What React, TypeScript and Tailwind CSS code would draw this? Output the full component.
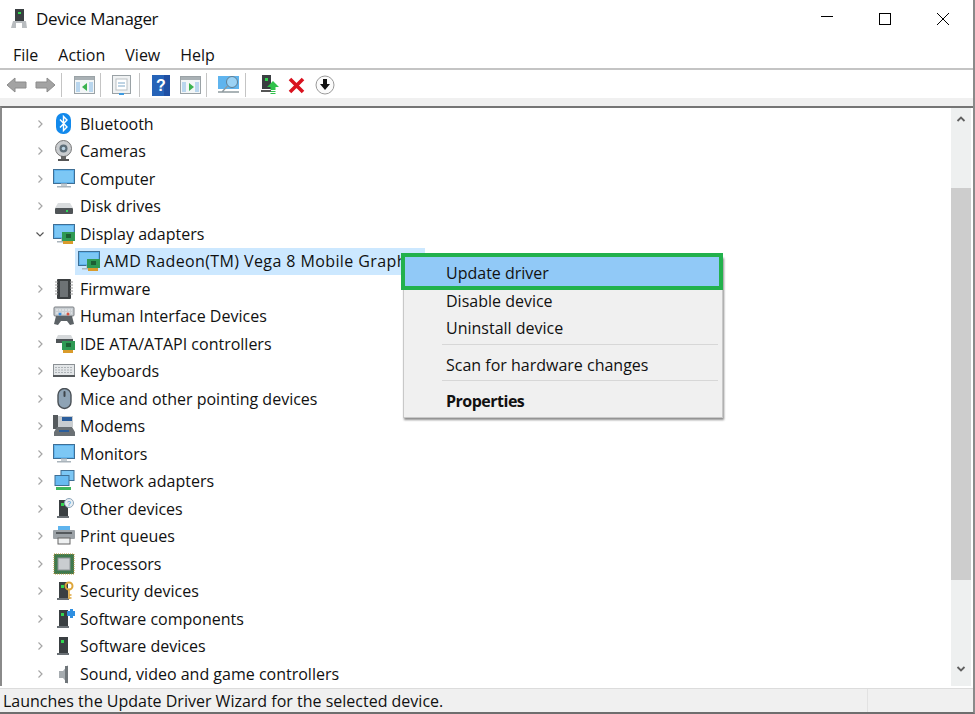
import type { ReactNode } from "react";

const font = "font-['Open_Sans','Noto_Sans',sans-serif]";

const Svg = ({ children, w = 22, h = 22 }: { children: ReactNode; w?: number; h?: number }) => (
  <svg width={w} height={h} viewBox={`0 0 ${w} ${h}`} className="shrink-0">
    {children}
  </svg>
);

const Screen = ({ board }: { board?: boolean }) => (
  <Svg>
    <rect x="0.5" y="1.5" width="21" height="14" fill="#5fb4ee" stroke="#3f6f95" />
    <rect x="2" y="3" width="18" height="11" fill="#7cc7f5" />
    <rect x="8" y="15.5" width="6" height="2.5" fill="#c4ccd2" />
    <rect x="4" y="18" width="14" height="1.5" fill="#aab4bb" />
    {board && (
      <>
        <rect x="9" y="9" width="13" height="9" fill="#2f9a54" />
        <rect x="13" y="11" width="5" height="4" fill="#1d5f34" />
        <rect x="10" y="18" width="10" height="3" fill="#d99b2b" />
      </>
    )}
  </Svg>
);

const Tower = ({ children }: { children?: ReactNode }) => (
  <Svg>
    <rect x="6" y="2" width="9" height="16" fill="#3a3f42" />
    <rect x="8" y="5" width="3" height="3" fill="#31d64f" />
    <rect x="4" y="18" width="12" height="2" fill="#6a7075" />
    {children}
  </Svg>
);

const icons: Record<string, ReactNode> = {
  Bluetooth: (
    <Svg>
      <rect x="3" y="0" width="15" height="21" rx="7" fill="#1289ec" />
      <path d="M7 6.5l7 7.5-3.5 3.5V3.5L14 7l-7 7.5" fill="none" stroke="#fff" strokeWidth="1.4" />
    </Svg>
  ),
  Cameras: (
    <Svg>
      <circle cx="10.5" cy="8.5" r="8" fill="#c9cccf" stroke="#777" />
      <circle cx="10.5" cy="8.5" r="4" fill="#5d6d78" />
      <circle cx="10.5" cy="8.5" r="1.8" fill="#b9d2e2" />
      <rect x="8" y="16" width="5" height="3" fill="#666" />
      <rect x="5" y="19" width="11" height="2" fill="#555" />
    </Svg>
  ),
  Computer: <Screen />,
  "Disk drives": (
    <Svg>
      <path d="M5 8h12l3 5H2z" fill="#d9dcde" />
      <rect x="2" y="13" width="18" height="6" rx="1" fill="#4f5457" />
      <rect x="13" y="15" width="2" height="2" fill="#2fd65a" />
    </Svg>
  ),
  "Display adapters": <Screen board />,
  Firmware: (
    <Svg>
      <rect x="4" y="1" width="14" height="20" rx="1" fill="#3b3f41" />
      <rect x="7" y="3" width="8" height="16" fill="#6d7275" />
      <path d="M2 4h3M2 7h3M2 10h3M2 13h3M2 16h3M17 4h3M17 7h3M17 10h3M17 13h3M17 16h3" stroke="#999" />
    </Svg>
  ),
  "Human Interface Devices": (
    <Svg>
      <rect x="1" y="2" width="20" height="9" rx="1" fill="#c9ced2" stroke="#7a7f83" />
      <path d="M3 5h16M3 8h16" stroke="#eef0f1" strokeDasharray="2 1" />
      <path d="M1 19l2-8h16l2 8-4 1-3-4H8l-3 4z" fill="#5c6266" />
      <circle cx="7" cy="9" r="1.5" fill="#3a8ede" />
      <circle cx="15" cy="9" r="1.5" fill="#d9523f" />
    </Svg>
  ),
  "IDE ATA/ATAPI controllers": (
    <Svg>
      <path d="M5 2h13l2 4H3z" fill="#d6d9db" />
      <rect x="3" y="6" width="17" height="4" fill="#4f5457" />
      <rect x="9" y="8" width="13" height="9" fill="#2f9a54" />
      <rect x="13" y="10" width="5" height="4" fill="#1d5f34" />
      <rect x="10" y="17" width="10" height="3" fill="#d99b2b" />
    </Svg>
  ),
  Keyboards: (
    <Svg>
      <rect x="0.5" y="4.5" width="21" height="12" fill="#e3e6e8" stroke="#8b9094" />
      <path d="M2 7.5h18M2 10h18M2 12.5h18" stroke="#aeb3b7" strokeDasharray="2 1" />
      <rect x="0" y="15" width="22" height="2" fill="#55595c" />
    </Svg>
  ),
  "Mice and other pointing devices": (
    <Svg>
      <rect x="5" y="0.5" width="13" height="20" rx="6.5" fill="#8ea3b5" stroke="#4a5056" strokeWidth="1.4" />
      <rect x="10.5" y="3" width="2" height="6" rx="1" fill="#3f464c" />
    </Svg>
  ),
  Modems: (
    <Svg>
      <rect x="0" y="0" width="5" height="14" fill="#555a5d" />
      <rect x="5" y="1" width="15" height="11" fill="#c9cdd0" />
      <rect x="9" y="2" width="10" height="4" fill="#2b5e9c" />
      <path d="M4 12h15l3 5v4H1v-4z" fill="#6a7074" />
      <rect x="6" y="15" width="10" height="2" fill="#2b5e9c" />
    </Svg>
  ),
  Monitors: <Screen />,
  "Network adapters": (
    <Svg>
      <rect x="8" y="0.5" width="13" height="10" fill="#7cc7f5" stroke="#3f6f95" />
      <rect x="2" y="5.5" width="14" height="10" fill="#68baf1" stroke="#3f6f95" />
      <rect x="3" y="17" width="15" height="3" fill="#3fb65c" />
    </Svg>
  ),
  "Other devices": (
    <Tower>
      <circle cx="16" cy="5" r="4.5" fill="#e8eef3" stroke="#8da5b9" />
      <text x="14" y="8" fontSize="7" fill="#3b82c4" fontFamily="Liberation Sans">?</text>
    </Tower>
  ),
  "Print queues": (
    <Svg>
      <rect x="5" y="1" width="12" height="4" fill="#5fb4ee" />
      <rect x="0" y="5" width="22" height="9" rx="1" fill="#9ca2a7" />
      <rect x="3" y="7" width="16" height="2" fill="#54595d" />
      <rect x="5" y="13" width="12" height="6" fill="#eef0f1" stroke="#666" />
    </Svg>
  ),
  Processors: (
    <Svg>
      <rect x="1" y="1" width="20" height="20" fill="#3f7a4e" stroke="#b58f38" strokeDasharray="1 1" />
      <rect x="5" y="5" width="12" height="12" fill="#c9cdd0" stroke="#8d9296" />
    </Svg>
  ),
  "Security devices": (
    <Tower>
      <circle cx="16" cy="6" r="3.5" fill="none" stroke="#dea63a" strokeWidth="2" />
      <path d="M16 9v10M16 15h2.5M16 18h2.5" stroke="#dea63a" strokeWidth="1.6" />
    </Tower>
  ),
  "Software components": (
    <Tower>
      <path d="M14 3h3V1h3v2h2v5h-2v2h-3V8h-3z" fill="#2f8fe0" />
    </Tower>
  ),
  "Software devices": <Tower />,
  "Sound, video and game controllers": (
    <Svg>
      <path d="M6 8h4l5-6v19l-5-6H6z" fill="#a6acb0" />
      <rect x="12" y="3" width="3" height="17" fill="#70767a" />
    </Svg>
  ),
};

const devices = [
  "Bluetooth",
  "Cameras",
  "Computer",
  "Disk drives",
  "Display adapters",
  "AMD",
  "Firmware",
  "Human Interface Devices",
  "IDE ATA/ATAPI controllers",
  "Keyboards",
  "Mice and other pointing devices",
  "Modems",
  "Monitors",
  "Network adapters",
  "Other devices",
  "Print queues",
  "Processors",
  "Security devices",
  "Software components",
  "Software devices",
  "Sound, video and game controllers",
];

function Row({ name }: { name: string }) {
  if (name === "AMD") {
    return (
      <div className="flex h-[27.5px] items-center pl-[73px]">
        <div className="flex h-[27px] w-[350px] items-center gap-[4px] overflow-hidden bg-[#cce8ff] pl-[3px]">
          <Screen board />
          <span className="whitespace-nowrap tracking-[0.4px]">AMD Radeon(TM) Vega 8 Mobile Graphics</span>
        </div>
      </div>
    );
  }
  const open = name === "Display adapters";
  return (
    <div className="flex h-[27.5px] items-center">
      <div className="flex w-[51px] justify-end">
        <svg width="12" height="12" viewBox="0 0 12 12" className="mr-[7px]">
          {open ? (
            <path d="M2.5 4.5L6 8l3.5-3.5" fill="none" stroke="#555" strokeWidth="1.2" />
          ) : (
            <path d="M4.5 2.5L8 6l-3.5 3.5" fill="none" stroke="#a6a6a6" strokeWidth="1.2" />
          )}
        </svg>
      </div>
      <div className="flex w-[27px] justify-start">{icons[name]}</div>
      <span className="whitespace-nowrap">{name}</span>
    </div>
  );
}

const Sep = () => <div className="mx-[5px] h-[24px] w-px bg-[#c4c4c4]" />;

const Arrow = ({ flip }: { flip?: boolean }) => (
  <svg width="21" height="16" viewBox="0 0 21 16" className={flip ? "-scale-x-100" : ""}>
    <path d="M1 8l8-7v4h11v6H9v4z" fill="#a3a3a3" stroke="#8c8c8c" />
  </svg>
);

const Panel = ({ flip }: { flip?: boolean }) => (
  <svg width="21" height="18" viewBox="0 0 21 18">
    <rect x="0.5" y="0.5" width="20" height="17" fill="#f3f6f7" stroke="#9aa2a6" />
    <rect x="1" y="1" width="19" height="3" fill="#a9b1b5" />
    <rect x="2" y="6" width="4" height="10" fill="#b9d6ee" />
    <rect x="15" y="6" width="4" height="10" fill="#b9d6ee" />
    <path d={flip ? "M9 7l5 4-5 4z" : "M13 7l-5 4 5 4z"} fill="#3bb34f" />
  </svg>
);

const menuText = "flex items-center pl-[42px] text-[16px]";

export default function App() {
  return (
    <div className={`relative flex h-[714px] w-[975px] flex-col overflow-hidden border-r-2 border-b-2 border-r-[#8a8a8a] border-b-[#6e6e6e] bg-white text-[16px] text-[#111] ${font}`}>
      {/* title bar */}
      <div className="flex h-[41px] shrink-0 items-center pb-[4px]">
        <div className="ml-[11px] mr-[9px]">
          <svg width="16" height="20" viewBox="0 0 16 20">
            <rect x="4" y="0" width="9" height="12" fill="#3a3f42" />
            <rect x="7" y="3" width="3" height="2" fill="#31d64f" />
            <path d="M2 12h13l1 7H0z" fill="#b9bdc0" />
            <rect x="5" y="14" width="6" height="5" fill="#fff" />
          </svg>
        </div>
        <span className="text-[17px] leading-none tracking-[-0.35px]">Device Manager</span>
        <div className="ml-auto flex items-center">
          <svg width="14" height="14" viewBox="0 0 14 14" className="mr-[44px]">
            <path d="M1 4.5h12" stroke="#000" />
          </svg>
          <svg width="14" height="14" viewBox="0 0 14 14" className="mr-[44px]">
            <rect x="1.5" y="1.5" width="11" height="11" fill="none" stroke="#000" />
          </svg>
          <svg width="14" height="14" viewBox="0 0 14 14" className="mr-[23px]">
            <path d="M1 1l12 12M13 1L1 13" stroke="#000" />
          </svg>
        </div>
      </div>

      {/* menu bar */}
      <div className="flex h-[29px] shrink-0 items-center gap-[20px] border-b-2 border-b-[#c4c4c4] pl-[13px] pt-[1px]">
        <span>File</span>
        <span>Action</span>
        <span>View</span>
        <span>Help</span>
      </div>

      {/* toolbar */}
      <div className="flex h-[28px] shrink-0 items-center pl-[6px] pt-[2px]">
        <Arrow />
        <div className="w-[8px]" />
        <Arrow flip />
        <Sep />
        <div className="w-[7px]" />
        <Panel />
        <Sep />
        <div className="w-[6px]" />
        <svg width="19" height="21" viewBox="0 0 19 21">
          <rect x="0.5" y="0.5" width="18" height="18" fill="#f0f2f3" stroke="#9aa2a6" />
          <rect x="4" y="4" width="11" height="11" fill="#fff" stroke="#b9c0c4" />
          <path d="M6 8h7M6 11h7" stroke="#7fa8c8" />
          <rect x="7" y="18" width="5" height="2" fill="#3f9be0" />
        </svg>
        <div className="w-[3px]" />
        <Sep />
        <div className="w-[7px]" />
        <svg width="18" height="21" viewBox="0 0 18 21">
          <rect width="18" height="21" fill="#2563b8" />
          <rect x="12" width="6" height="21" fill="#1f4fa3" />
          <text x="4" y="16" fontSize="16" fontWeight="700" fill="#fff" fontFamily="Liberation Sans">?</text>
        </svg>
        <div className="w-[10px]" />
        <Panel flip />
        <Sep />
        <div className="w-[6px]" />
        <svg width="22" height="20" viewBox="0 0 22 20">
          <rect x="0" y="1" width="21" height="13" fill="#5fb4ee" />
          <circle cx="14" cy="7" r="5.5" fill="#9ad2f5" stroke="#5f7f95" />
          <path d="M9.5 11L4 17M0 17h21" stroke="#8f9a9f" strokeWidth="1.3" />
        </svg>
        <Sep />
        <div className="w-[10px]" />
        <svg width="18" height="20" viewBox="0 0 18 20">
          <rect x="1" y="0" width="9" height="14" fill="#3a3f42" />
          <rect x="4" y="3" width="3" height="3" fill="#31d64f" />
          <rect x="0" y="15" width="10" height="2" fill="#555" />
          <path d="M12 6l6 6h-3.5v3h-5v-3H6z" fill="#2fc24a" />
          <path d="M9.5 16.5h5M9.5 18.5h5" stroke="#2fc24a" />
        </svg>
        <div className="w-[9px]" />
        <svg width="17" height="17" viewBox="0 0 17 17">
          <path d="M2 2l13 13M15 2L2 15" stroke="#d9121f" strokeWidth="3.6" />
        </svg>
        <div className="w-[10px]" />
        <svg width="20" height="20" viewBox="0 0 20 20">
          <circle cx="10" cy="10" r="9" fill="#fbfbfb" stroke="#9a9a9a" />
          <path d="M8 4h4v5h3l-5 6-5-6h3z" fill="#111" />
        </svg>
      </div>

      <div className="h-[8px] shrink-0 bg-[#f0f0f0]" />

      {/* tree and scrollbar */}
      <div className="flex h-[580px] shrink-0 overflow-hidden border-t-2 border-l-2 border-t-[#757575] border-l-[#8a8a8a]">
        <div className="min-w-0 flex-1 pt-[2px]">
          {devices.map((d) => (
            <Row key={d} name={d} />
          ))}
        </div>
        <div className="flex w-[20px] shrink-0 flex-col items-center bg-[#eef0f0]">
          <svg width="10" height="8" viewBox="0 0 10 8" className="mt-[7px]">
            <path d="M1.5 6L5 2.5 8.5 6" fill="none" stroke="#606060" strokeWidth="1.8" />
          </svg>
          <div className="mt-[65px] h-[392px] w-full bg-[#cdcdcd]" />
          <svg width="10" height="8" viewBox="0 0 10 8" className="mt-[85px]">
            <path d="M1.5 2L5 5.5 8.5 2" fill="none" stroke="#606060" strokeWidth="1.8" />
          </svg>
        </div>
        <div className="w-[2px] shrink-0" />
      </div>

      {/* status bar */}
      <div className="mt-[2px] flex min-h-0 flex-1 items-center border-t border-t-[#dcdcdc] bg-[#f0f0f0] pl-[3px]">
        <span className="flex-1">Launches the Update Driver Wizard for the selected device.</span>
        <div className="h-full w-px bg-[#e2e2e2]" />
        <div className="w-[105px]" />
      </div>

      {/* context menu */}
      <div className="absolute left-[403px] top-[256px] h-[162px] w-[320px] border border-[#c8c8c8] bg-[#f0f0f0] shadow-[1px_2px_2px_rgba(0,0,0,0.45)]">
        <div className={`h-[31px] bg-[#91c9f7] ${menuText}`}>Update driver</div>
        <div className={`h-[25px] ${menuText}`}>Disable device</div>
        <div className={`h-[29px] ${menuText}`}>Uninstall device</div>
        <div className="ml-[38px] mr-[4px] mt-[2px] h-px bg-[#d7d7d7]" />
        <div className={`h-[35px] pt-[4px] ${menuText}`}>Scan for hardware changes</div>
        <div className="ml-[38px] mr-[4px] h-px bg-[#d7d7d7]" />
        <div className={`h-[37px] pt-[3px] font-bold tracking-[-0.5px] ${menuText}`}>Properties</div>
      </div>
      <div className="absolute left-[401px] top-[253px] h-[37px] w-[322px] border-4 border-[#22b14c]" />
    </div>
  );
}
